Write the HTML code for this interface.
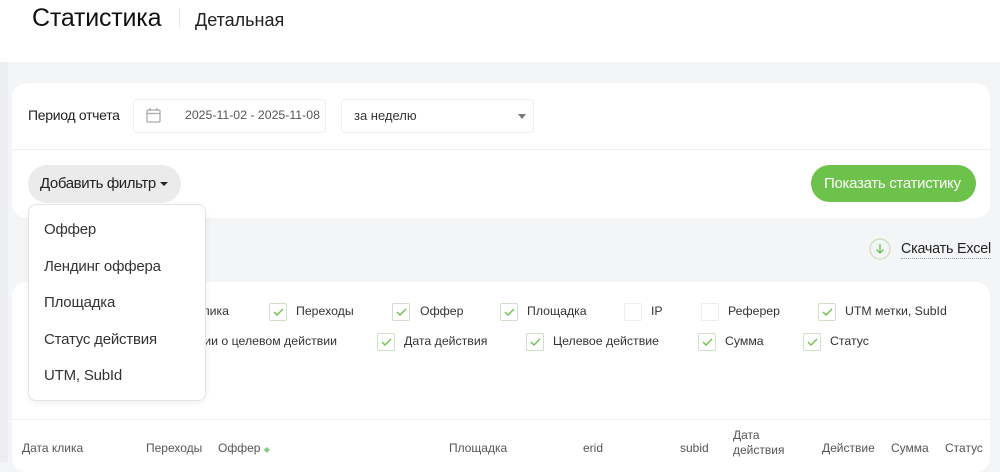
<!DOCTYPE html>
<html><head><meta charset="utf-8"><style>
*{margin:0;padding:0;box-sizing:border-box}
body{width:1000px;height:461px;overflow:hidden;background:#f4f5f7;font-family:"Liberation Sans",sans-serif;color:#222;position:relative}
.a{position:absolute;white-space:nowrap}
.cb{position:absolute;width:18px;height:18px;border:1px solid #cfe0c8;border-radius:2px;background:#fff}
.cb svg{position:absolute;left:3px;top:3px}
.cb.e{border-color:#eee}
.l{position:absolute;font-size:12.3px;color:#333;white-space:nowrap}
.th{position:absolute;font-size:12px;color:#555;white-space:nowrap}
.dd{position:absolute;font-size:15px;color:#333;left:44px;letter-spacing:-0.2px}
</style></head><body>
<div class="a" style="left:0;top:0;width:1000px;height:62px;background:#fff"></div>
<div class="a" style="left:0;top:62px;width:8px;height:400px;background:#eceef1"></div>
<div class="a" style="left:32px;top:4px;font-size:25px;color:#111;letter-spacing:-0.2px">Статистика</div>
<div class="a" style="left:179px;top:8px;width:1px;height:20px;background:#e6e6e6"></div>
<div class="a" style="left:195px;top:10px;font-size:18px;color:#222">Детальная</div>

<div class="a" style="left:12px;top:83px;width:978px;height:135px;background:#fff;border-radius:14px"></div>
<div class="a" style="left:12px;top:149px;width:978px;height:1px;background:#eceeef"></div>
<div class="a" style="left:28px;top:107px;font-size:14px;color:#222;letter-spacing:-0.3px">Период отчета</div>
<div class="a" style="left:133px;top:99px;width:193px;height:34px;border:1px solid #f0f0f0;border-radius:4px"></div>
<svg class="a" style="left:146px;top:107px" width="15" height="16" viewBox="0 0 15 16"><rect x="1" y="3" width="13" height="12" rx="1" fill="none" stroke="#aaa" stroke-width="1.3"/><line x1="1" y1="6.5" x2="14" y2="6.5" stroke="#aaa" stroke-width="1.3"/><line x1="4" y1="1" x2="4" y2="4" stroke="#aaa" stroke-width="1.3"/><line x1="11" y1="1" x2="11" y2="4" stroke="#aaa" stroke-width="1.3"/></svg>
<div class="a" style="left:185px;top:108px;font-size:12.3px;color:#555">2025-11-02 - 2025-11-08</div>
<div class="a" style="left:341px;top:99px;width:193px;height:34px;border:1px solid #f0f0f0;border-radius:4px"></div>
<div class="a" style="left:354px;top:108px;font-size:13px;color:#333">за неделю</div>
<div class="a" style="left:518px;top:114px;border-left:4px solid transparent;border-right:4px solid transparent;border-top:5px solid #777"></div>

<div class="a" style="left:28px;top:165px;width:153px;height:38px;background:#ebebeb;border-radius:19px"></div>
<div class="a" style="left:40px;top:175px;font-size:15px;color:#222;letter-spacing:-0.4px">Добавить фильтр</div>
<div class="a" style="left:160px;top:182px;border-left:4px solid transparent;border-right:4px solid transparent;border-top:4px solid #222"></div>
<div class="a" style="left:811px;top:165px;width:165px;height:37px;background:#6cc24a;border-radius:19px"></div>
<div class="a" style="left:824px;top:175px;font-size:15px;color:#fff;letter-spacing:-0.3px">Показать статистику</div>

<svg class="a" style="left:869px;top:238px" width="22" height="22" viewBox="0 0 22 22"><circle cx="11" cy="11" r="10" fill="none" stroke="#c5dfb8" stroke-width="1.2"/><path d="M11 6v9M7.5 11.5L11 15l3.5-3.5" fill="none" stroke="#6cc24a" stroke-width="1.3"/></svg>
<div class="a" style="left:901px;top:240px;font-size:14.3px;color:#222;border-bottom:1px dotted #999;line-height:18px;letter-spacing:-0.2px">Скачать Excel</div>

<div class="a" style="left:12px;top:282px;width:978px;height:190px;background:#fff;border-radius:14px"></div>
<div class="a" style="left:12px;top:419px;width:978px;height:1px;background:#eceeef"></div>

<div class="l" style="right:771px;top:304px">Дата клика</div>
<div class="l" style="right:663px;top:334px">Информации о целевом действии</div>
<div class="cb" style="left:28px;top:364px"></div>

<div class="cb" style="left:269px;top:303px"><svg width="11" height="10"><path d="M1 5l3 3 6-6" fill="none" stroke="#6cc24a" stroke-width="1.4"/></svg></div><div class="l" style="left:296px;top:304px">Переходы</div>
<div class="cb" style="left:392px;top:303px"><svg width="11" height="10"><path d="M1 5l3 3 6-6" fill="none" stroke="#6cc24a" stroke-width="1.4"/></svg></div><div class="l" style="left:420px;top:304px">Оффер</div>
<div class="cb" style="left:500px;top:303px"><svg width="11" height="10"><path d="M1 5l3 3 6-6" fill="none" stroke="#6cc24a" stroke-width="1.4"/></svg></div><div class="l" style="left:527px;top:304px">Площадка</div>
<div class="cb e" style="left:624px;top:303px"></div><div class="l" style="left:651px;top:304px">IP</div>
<div class="cb e" style="left:701px;top:303px"></div><div class="l" style="left:728px;top:304px">Реферер</div>
<div class="cb" style="left:818px;top:303px"><svg width="11" height="10"><path d="M1 5l3 3 6-6" fill="none" stroke="#6cc24a" stroke-width="1.4"/></svg></div><div class="l" style="left:845px;top:304px">UTM метки, SubId</div>

<div class="cb" style="left:377px;top:333px"><svg width="11" height="10"><path d="M1 5l3 3 6-6" fill="none" stroke="#6cc24a" stroke-width="1.4"/></svg></div><div class="l" style="left:404px;top:334px">Дата действия</div>
<div class="cb" style="left:526px;top:333px"><svg width="11" height="10"><path d="M1 5l3 3 6-6" fill="none" stroke="#6cc24a" stroke-width="1.4"/></svg></div><div class="l" style="left:553px;top:334px">Целевое действие</div>
<div class="cb" style="left:698px;top:333px"><svg width="11" height="10"><path d="M1 5l3 3 6-6" fill="none" stroke="#6cc24a" stroke-width="1.4"/></svg></div><div class="l" style="left:725px;top:334px">Сумма</div>
<div class="cb" style="left:803px;top:333px"><svg width="11" height="10"><path d="M1 5l3 3 6-6" fill="none" stroke="#6cc24a" stroke-width="1.4"/></svg></div><div class="l" style="left:830px;top:334px">Статус</div>

<div class="th" style="left:22px;top:441px">Дата клика</div>
<div class="th" style="left:146px;top:441px">Переходы</div>
<div class="th" style="left:218px;top:441px">Оффер <span style="color:#8c8;font-size:8px">◆</span></div>
<div class="th" style="left:449px;top:441px">Площадка</div>
<div class="th" style="left:583px;top:441px">erid</div>
<div class="th" style="left:680px;top:441px">subid</div>
<div class="th" style="left:733px;top:428px;line-height:15px">Дата<br>действия</div>
<div class="th" style="left:822px;top:441px">Действие</div>
<div class="th" style="left:891px;top:441px">Сумма</div>
<div class="th" style="left:945px;top:441px">Статус</div>

<div class="a" style="left:28px;top:204px;width:178px;height:197px;background:#fff;border:1px solid #e4e4e4;border-radius:8px;box-shadow:0 2px 6px rgba(0,0,0,.06)"></div>
<div class="dd" style="top:221px">Оффер</div>
<div class="dd" style="top:258px">Лендинг оффера</div>
<div class="dd" style="top:294px">Площадка</div>
<div class="dd" style="top:331px">Статус действия</div>
<div class="dd" style="top:367px">UTM, SubId</div>
</body></html>
